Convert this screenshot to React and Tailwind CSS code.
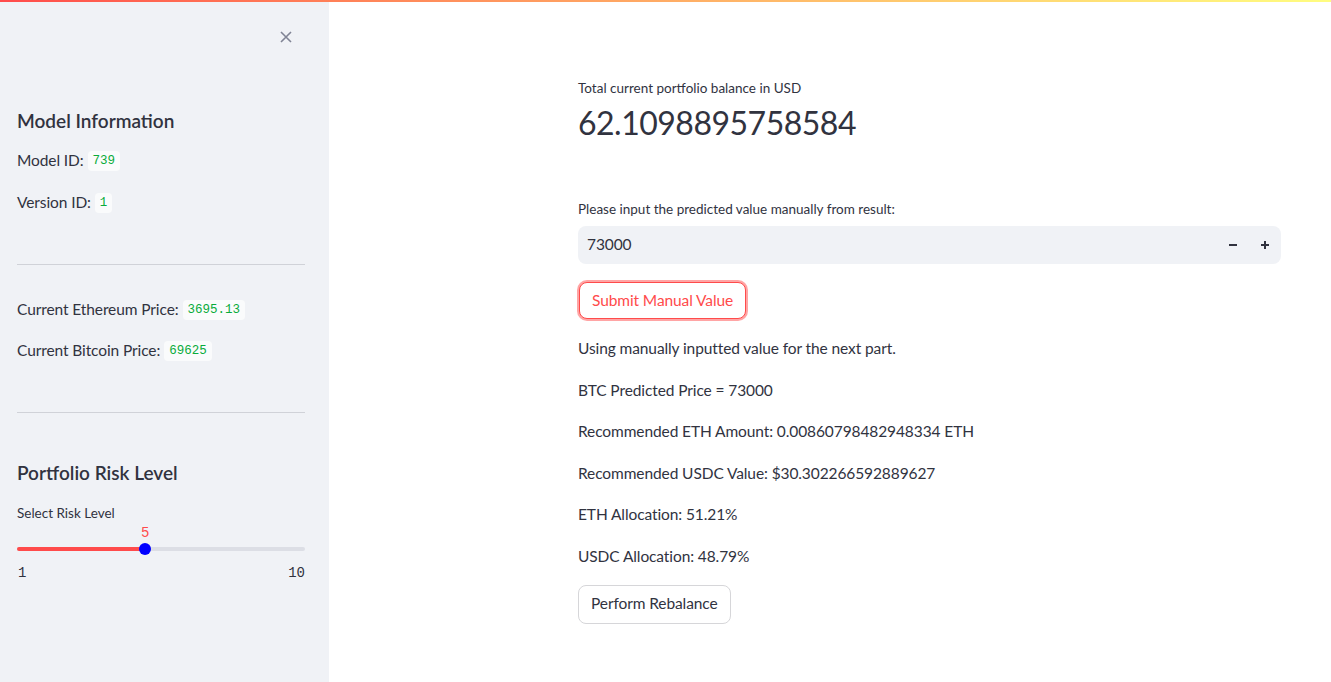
import React from "react";

const Code = ({ children }) => (
  <code className="ml-[4px] rounded-[4px] bg-[#fafbfc] px-[5px] py-[1px] font-['Liberation_Mono',monospace] text-[12.5px] leading-[18px] tracking-normal text-[#09ab3b]">
    {children}
  </code>
);

const Row = ({ className, children }) => (
  <p className={`flex h-[24px] items-center ${className}`}>{children}</p>
);

const Sidebar = () => (
  <aside className="w-[329px] shrink-0 bg-[#f0f2f6] pl-[17px] pr-[24px]">
    <div className="flex h-[74px] items-center justify-end pr-[12px]">
      <svg width="14" height="14" viewBox="0 0 14 14" className="text-[#808495]">
        <path d="M2 2 L12 12 M12 2 L2 12" stroke="currentColor" strokeWidth="1.6" />
      </svg>
    </div>

    <h3 className="mt-[32px] text-[19px] font-semibold leading-[30px] tracking-normal">Model Information</h3>
    <Row className="mt-[13px]">
      Model ID: <Code>739</Code>
    </Row>
    <Row className="mt-[18px]">
      Version ID: <Code>1</Code>
    </Row>

    <hr className="mt-[49px] border-0 border-t border-[#d0d2d8]" />

    <Row className="mt-[33px]">
      Current Ethereum Price: <Code>3695.13</Code>
    </Row>
    <Row className="mt-[17px]">
      Current Bitcoin Price: <Code>69625</Code>
    </Row>

    <hr className="mt-[49px] border-0 border-t border-[#d0d2d8]" />

    <h3 className="mt-[45px] text-[19px] font-semibold leading-[30px] tracking-normal">Portfolio Risk Level</h3>
    <p className="mt-[15px] text-[13.5px] leading-[20px] tracking-normal">Select Risk Level</p>

    <div className="relative mt-[24px] h-[4px] rounded-full bg-[#dcdee5]">
      <div className="h-[4px] w-[128px] rounded-full bg-[#ff4b4b]" />
      <div className="absolute left-[122px] top-[-4px] h-[12px] w-[12px] rounded-full bg-[#0000ff]" />
      <span className="absolute left-[124px] top-[-24px] font-['Liberation_Mono',monospace] text-[14px] leading-[20px] text-[#ff4b4b]">
        5
      </span>
    </div>
    <div className="mt-[12px] flex justify-between font-['Liberation_Mono',monospace] text-[14px] leading-[20px] tracking-normal">
      <span className="pl-[1px]">1</span>
      <span>10</span>
    </div>
  </aside>
);

const lines = [
  "Using manually inputted value for the next part.",
  "BTC Predicted Price = 73000",
  "Recommended ETH Amount: 0.00860798482948334 ETH",
  "Recommended USDC Value: $30.302266592889627",
  "ETH Allocation: 51.21%",
  "USDC Allocation: 48.79%",
];

export default function App() {
  return (
    <div className="relative flex h-[682px] overflow-hidden font-['Lato',sans-serif] text-[15.5px] tracking-[-0.1px] text-[#31333f]">
      <div className="absolute left-0 right-0 top-0 h-[2px] bg-gradient-to-r from-[#ff4b4b] to-[#fffd80]" />
      <Sidebar />

      <main className="flex-1 bg-white">
        <div className="ml-[249px] w-[703px]">
          <p className="mt-[78px] text-[13.5px] leading-[20px] tracking-normal">Total current portfolio balance in USD</p>
          <p className="mt-[3px] text-[32px] leading-[44px] tracking-[-0.5px]">62.1098895758584</p>

          <p className="mt-[54px] text-[13.5px] leading-[20px] tracking-normal">
            Please input the predicted value manually from result:
          </p>
          <div className="mt-[7px] flex h-[38px] items-center rounded-[8px] bg-[#f0f2f6] pl-[9px]">
            <span className="flex-1">73000</span>
            <div className="flex items-center">
              <span className="flex w-[32px] justify-center">
                <svg width="10" height="10" viewBox="0 0 10 10">
                  <path d="M1 5 H9" stroke="#31333f" strokeWidth="2" />
                </svg>
              </span>
              <span className="flex w-[32px] justify-center">
                <svg width="10" height="10" viewBox="0 0 10 10">
                  <path d="M1 5 H9 M5 1 V9" stroke="#31333f" strokeWidth="2" />
                </svg>
              </span>
            </div>
          </div>

          <button className="ml-[1px] mt-[18px] flex h-[37px] items-center rounded-[8px] border border-[#ff4b4b] bg-white px-[12px] text-[#ff4b4b] shadow-[0_0_0_2px_rgba(255,75,75,0.5)]">
            Submit Manual Value
          </button>

          <div className="mt-[17px] flex flex-col gap-[17.5px]">
            {lines.map((t) => (
              <p key={t} className="leading-[24px]">
                {t}
              </p>
            ))}
          </div>

          <button className="mt-[17px] flex h-[39px] items-center rounded-[8px] border border-[#d6d6d9] bg-white px-[12px]">
            Perform Rebalance
          </button>
        </div>
      </main>
    </div>
  );
}
